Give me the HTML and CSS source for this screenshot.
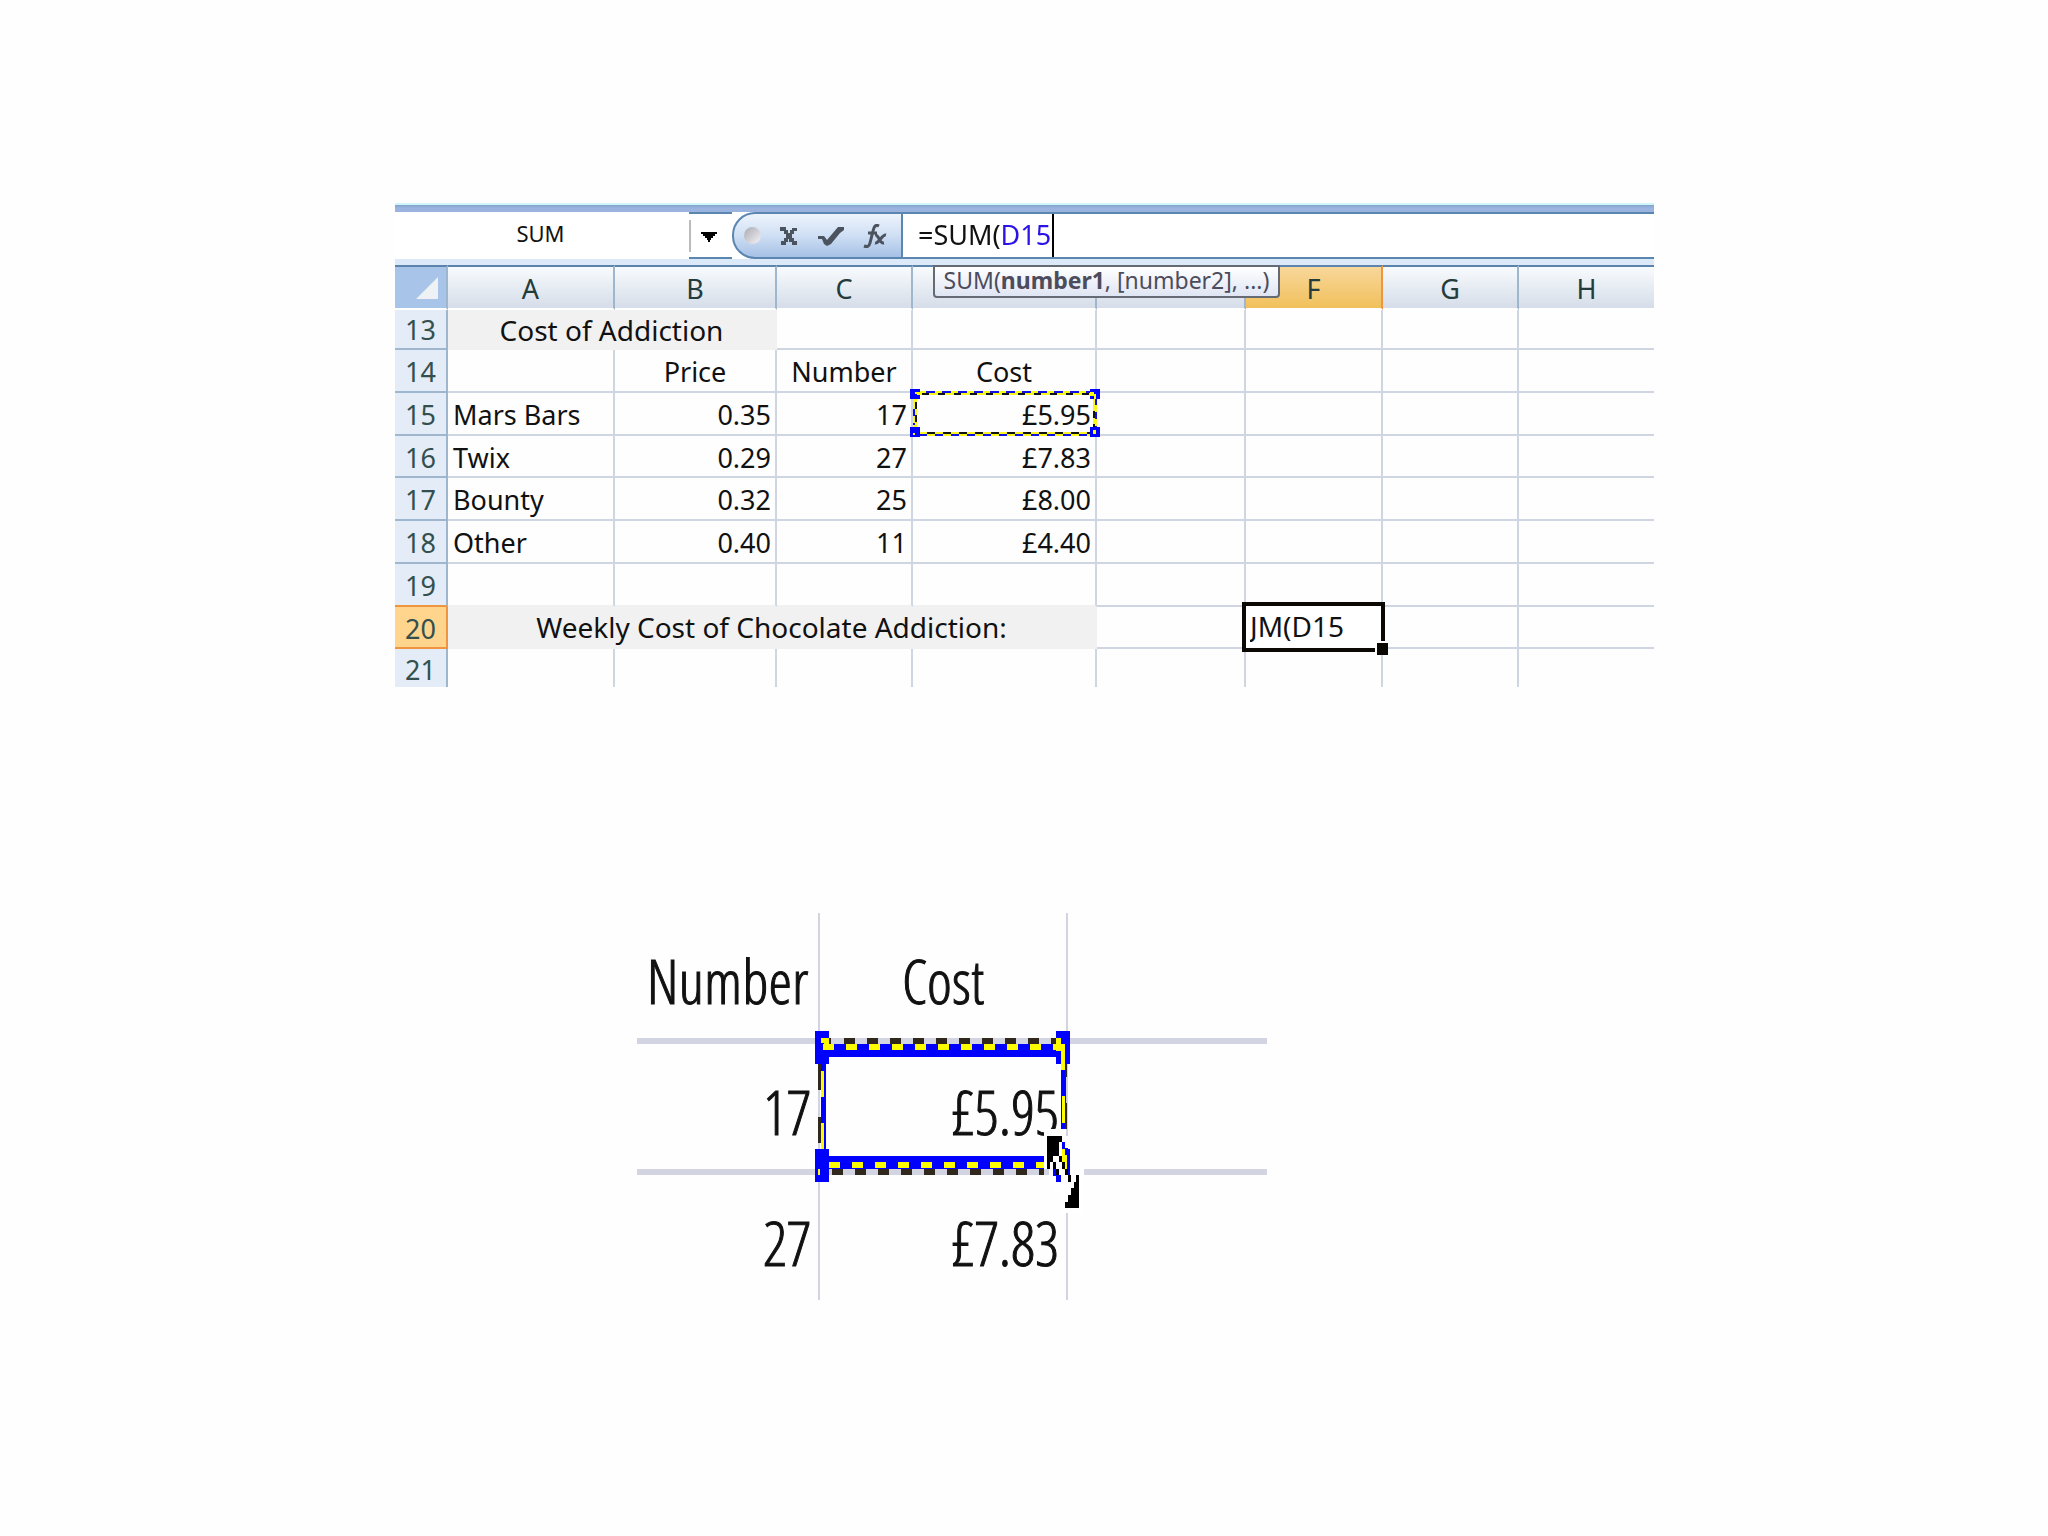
FILE: index.html
```
<!DOCTYPE html>
<html lang="en">
<head>
    <meta charset="UTF-8" />
    <title>Cost of Addiction</title>
    <meta name="viewport" content="width=device-width, initial-scale=1.0" />
    <link rel="stylesheet" href="styles.css">
</head>
<body>

<main>
    <section class="sheet">
        <div class="ribbon-edge"></div>
        <div class="formula-bar">
            <div class="name-box">
                <input type="text" aria-label="Name box" value="SUM" />
            </div>
            <button type="button" class="drop" aria-label="Show names">
                <svg width="16" height="10" viewBox="0 0 16 10"><path d="M0 0h16v2h-2v2h-2v2h-2v2H9v2H7V8H6V6H4V4H2V2H0z" /></svg>
            </button>
            <div class="tools">
                <span class="ball"></span>
                <button type="button" aria-label="Cancel">
                    <svg width="18" height="20" viewBox="0 0 18 20"><path d="M0 1h6v3h2v3h2V4h2V2h5v3h-3v3h-2v4h2v3h3v4h-5v-3h-3v-3H8v3H6v3H1v-4h3v-3h2V8H4V5H0z" /></svg>
                </button>
                <button type="button" aria-label="Enter">
                    <svg width="26" height="20" viewBox="0 0 26 20"><path d="M0 10h6l3 4L20 1h6v3l-4 3-9 11-4 2-3-2-2-5H0z" /></svg>
                </button>
                <button type="button" aria-label="Insert function">
                    <svg width="24" height="24" viewBox="0 0 24 24" class="fx"><path d="M16 2c-4-2-5 1-6 5L7 19c-1 4-3 4-6 3M5 9h9" /><path d="M12 11c4-1 4 9 9 8M23 11c-4-1-7 9-11 8" /></svg>
                </button>
            </div>
            <div class="formula">
                <input type="text" aria-label="Formula" value="=SUM(D15" />
                <span class="caret"></span>
            </div>
        </div>
        <div class="grid-wrap">
            <div class="hint">SUM(<b>number1</b>, [number2], ...)</div>
            <table class="grid">
                <colgroup>
                    <col class="c-head"><col class="c-a"><col class="c-b"><col class="c-c"><col class="c-d"><col class="c-e"><col class="c-f"><col class="c-g"><col>
                </colgroup>
                <thead>
                    <tr>
                        <th class="corner"><svg width="22" height="22" viewBox="0 0 22 22"><path d="M22 0v22H0z" /></svg></th>
                        <th>A</th><th>B</th><th>C</th><th></th><th></th><th class="on">F</th><th>G</th><th>H</th>
                    </tr>
                </thead>
                <tbody>
                    <tr class="first"><th>13</th><td colspan="2" class="merged">Cost of Addiction</td><td></td><td></td><td></td><td></td><td></td><td></td></tr>
                    <tr><th>14</th><td></td><td class="mid">Price</td><td class="mid">Number</td><td class="mid">Cost</td><td></td><td></td><td></td><td></td></tr>
                    <tr>
                        <th>15</th><td>Mars Bars</td><td class="num">0.35</td><td class="num">17</td>
                        <td class="num picked">£5.95
                            <svg class="ants" width="190" height="49" viewBox="0 0 190 49">
                                <g class="yellow"><path d="M5 4H186M5 45H186" /><path d="M5 4V45M185 4V45" /></g>
                                <g class="blue"><path d="M16 3H180" stroke-dasharray="9 7" /><path d="M9 46H180" stroke-dasharray="8 8" /><path d="M4 20V36M186 9V40" stroke-dasharray="7 7" /></g>
                                <g class="black"><path d="M12 5H180" stroke-dasharray="7 9" /><path d="M17 44H180" stroke-dasharray="8 8" /><path d="M6 13V40M184 22V40" stroke-dasharray="7 6" /></g>
                                <path class="corners" d="M0 0h10v10H0zM180 0h10v10h-10zM0 38h10v10H0zM180 38h10v10h-10z" />
                                <path class="lit" d="M5 3h5v3H7V5H5zM180 3h4v2h2v5h-2V7h-4zM183 41h3v4h-3zM3 44h2v2H3z" />
                            </svg>
                        </td>
                        <td></td><td></td><td></td><td></td>
                    </tr>
                    <tr class="short"><th>16</th><td>Twix</td><td class="num">0.29</td><td class="num">27</td><td class="num">£7.83</td><td></td><td></td><td></td><td></td></tr>
                    <tr><th>17</th><td>Bounty</td><td class="num">0.32</td><td class="num">25</td><td class="num">£8.00</td><td></td><td></td><td></td><td></td></tr>
                    <tr><th>18</th><td>Other</td><td class="num">0.40</td><td class="num">11</td><td class="num">£4.40</td><td></td><td></td><td></td><td></td></tr>
                    <tr class="above"><th>19</th><td></td><td></td><td></td><td></td><td></td><td></td><td></td><td></td></tr>
                    <tr class="short"><th class="on">20</th><td colspan="4" class="merged">Weekly Cost of Chocolate Addiction:</td><td></td>
                        <td class="active"><div class="editor"><input type="text" aria-label="Cell F20" value="JM(D15" /><span class="handle"></span></div></td>
                        <td></td><td></td></tr>
                    <tr class="last"><th>21</th><td></td><td></td><td></td><td></td><td></td><td></td><td></td><td></td></tr>
                </tbody>
            </table>
        </div>
    </section>

    <section class="closeup">
        <table>
            <colgroup><col class="k-number"><col class="k-cost"><col></colgroup>
            <tr><td class="mid">Number</td><td class="mid">Cost</td><td></td></tr>
            <tr>
                <td>17</td>
                <td class="picked">£5.95
                    <svg class="drag" width="270" height="182" viewBox="0 0 270 182" shape-rendering="crispEdges">
                        <path class="corners" d="M0 0h14v33H0zM241 0h14v33h-14zM0 118h14v33H0zM241 118h14v33h-14z" />
                        <path class="corners" d="M14 13h227v13H14zM14 125h215v13H14zM6 33h5v85H6zM246 33h5v65h-5z" />
                        <path class="dash-black" d="M29 10H241" stroke-dasharray="11 12" />
                        <path class="dash-yellow" d="M8 16H241" stroke-dasharray="11 12" />
                        <path class="dash-yellow" d="M14 134H229" stroke-dasharray="11 12" />
                        <path class="dash-black" d="M17 141H229" stroke-dasharray="11 12" />
                        <path class="lit" d="M6 7h8v6H9v-1H6zM241 7h5v6h4v26h-4V20h-5zM6 40h3v26H6zM6 92h3v26H6zM247 65h3v27h-3zM3 138h2v6H3z" />
                        <path class="dark" d="M14 7h2v6h-2zM3 33h3v26H3zM3 86h3v26H3zM250 33h2v13h-2zM250 72h2v26h-2z" />
                        <!-- double-headed resize pointer -->
                        <path fill="#fff" d="M229 98h20v7h4v13h3v20h13v45h-23v-20h-7v-12h-5v-13h-5z" />
                        <path class="corners" d="M247 111h3v6h3v1h2v26h-4v-20h-4zM241 117h3v7h-3zM238 131h3v13h5v7h-5v-6h-3z" />
                        <path class="lit" d="M247 118h3v6h2v15h-3v-7h-2z" />
                        <path d="M232 105h15v6h-3v7h-3v7h-3v6h-3v7h-3zM241 118h3v7h-3zM244 125h3v6h-3zM247 131h3v7h-3zM238 131h3v7h-3zM241 138h3v6h-3zM250 138h3v6h-3zM253 144h3v7h-3zM261 144h3v33h-14v-6h3v-7h3v-7h3v-6h2z" />
                    </svg>
                </td>
                <td></td>
            </tr>
            <tr class="last"><td>27</td><td>£7.83</td><td></td></tr>
        </table>
    </section>
</main>

</body>
</html>
```
FILE: styles.css
```
* {
  box-sizing: border-box;
}
body {
  margin: 0;
  background: #fefefe;
  color: #111;
  font-family: "Noto Sans", "Open Sans", sans-serif;
  font-size: 27px;
}
main {
  padding: 203px 394px 0 395px;
}
input,
button {
  font: inherit;
  color: inherit;
  border: none;
  background: none;
  padding: 0;
  outline: none;
}
table {
  width: 100%;
  table-layout: fixed;
  border-collapse: separate;
  border-spacing: 0;
}

/* formula bar */
.ribbon-edge {
  height: 9px;
  border-top: 2px solid #cff6fb;
  background: linear-gradient(#7fa3cb, #9bb3df 3px);
}
.formula-bar {
  display: flex;
  height: 47px;
  background: #fff;
}
.name-box {
  width: 294px;
}
.name-box input {
  width: 100%;
  height: 42px;
  padding-right: 3px;
  font-size: 22px;
  text-align: center;
}
.drop {
  width: 43px;
  border-top: 2px solid #5b86b0;
  border-bottom: 2px solid #5b86b0;
  background: linear-gradient(#bbb, #bbb) 0 6px / 2px 32px no-repeat;
}
.drop svg {
  display: block;
  margin: 2px auto 0 12px;
}
.tools {
  display: flex;
  align-items: center;
  width: 171px;
  padding: 0 14px 0 10px;
  justify-content: space-between;
  border: 2px solid #5b86b0;
  border-radius: 23px 0 0 23px;
  background: linear-gradient(#eef4fc, #cfdff4 50%, #a5c1e6);
}
.tools svg {
  display: block;
  fill: #4b535e;
}
.tools .fx {
  fill: none;
  stroke: #4b535e;
  stroke-width: 3;
}
.ball {
  width: 17px;
  height: 17px;
  border-radius: 50%;
  background: linear-gradient(135deg, #a9a9b1, #f4f4f8);
}
.formula {
  display: flex;
  flex: 1;
  padding-left: 15px;
  border-top: 2px solid #5b86b0;
  border-bottom: 2px solid #5b86b0;
}
.formula input {
  width: 134px;
  height: 41px;
  color: transparent;
  background: linear-gradient(90deg, #111 85px, #2a12e8 85px);
  -webkit-background-clip: text;
  background-clip: text;
}
.caret {
  width: 2px;
  background: #000;
}

/* worksheet */
.grid-wrap {
  position: relative;
  padding-top: 6px;
  background: #dce9f8;
}
.hint {
  position: absolute;
  z-index: 1;
  top: 6px;
  left: 538px;
  width: 347px;
  height: 33px;
  line-height: 27px;
  text-align: center;
  font-size: 23px;
  color: #4c4c5c;
  border: 2px solid #666a75;
  border-radius: 0 0 4px 4px;
  background: linear-gradient(#fff, #dfe5f3);
}
.grid {
  background: #fefefe;
}
.c-head { width: 53px; }
.c-a { width: 167px; }
.c-b { width: 162px; }
.c-c { width: 136px; }
.c-d { width: 184px; }
.c-e { width: 149px; }
.c-f { width: 137px; }
.c-g { width: 136px; }
.grid th,
.grid td {
  padding: 3px 5px 0;
  height: 43px;
  line-height: 34px;
  font-weight: normal;
  white-space: nowrap;
}
.grid td {
  text-align: left;
  border-right: 2px solid #d0d5e2;
  border-bottom: 2px solid #d0d5e2;
}
.grid td:last-child {
  border-right: none;
}
.grid thead th {
  height: 45px;
  color: #243b3b;
  border-top: 2px solid #5b83ab;
  border-right: 2px solid #9eb6ce;
  border-bottom: 2px solid #fff;
  background: linear-gradient(#f8fbfd, #d5dde9);
}
.grid thead th:last-child {
  border-right: none;
}
.grid thead .corner {
  padding: 0 8px 0 0;
  background: #a9c4e9;
}
.corner svg {
  display: block;
  margin-left: auto;
  fill: #eef2f4;
}
.grid thead .on {
  border-right-color: #f0953f;
  background: linear-gradient(#f8d79b, #f1c05b);
}
.grid tbody th {
  padding: 3px 0 0;
  color: #33504f;
  border-right: 2px solid #9eb6ce;
  border-bottom: 2px solid #9eb6ce;
  background: #e4ecf7;
}
.grid tbody .on {
  border-color: #f0953f;
  background: #ffd58d;
}
.grid .first th,
.grid .first td {
  height: 40px;
  padding-top: 2px;
}
.grid .short th,
.grid .short td { height: 42px; }
.grid .last th,
.grid .last td {
  height: 38px;
  padding-top: 4px;
  border-bottom: none;
}
.grid .mid,
.grid .merged {
  text-align: center;
}
.grid .num {
  text-align: right;
  padding-right: 4px;
}
.grid .merged {
  padding-top: 0;
  font-size: 28px;
  background: #f1f1f1;
  border-color: #f1f1f1;
}
.grid .above td:nth-child(-n+5) {
  border-bottom-color: #f1f1f1;
}
.grid .above th {
  border-bottom-color: #f0953f;
}
.picked {
  position: relative;
}
.ants {
  position: absolute;
  top: -4px;
  left: -3px;
  fill: none;
  stroke-width: 2;
}
.ants .yellow { stroke: #f8f820; stroke-width: 4; }
.ants .blue { stroke: #1010e0; }
.ants .black { stroke: #111; }
.corners { fill: #0000fe; stroke: none; }
.lit { fill: #fdfd00; stroke: none; }
.dark { fill: #30281c; }
.grid .active {
  position: relative;
  padding: 0;
}
.editor {
  position: absolute;
  top: -5px;
  left: -4px;
  width: 143px;
  height: 50px;
  border: 4px solid #0c0804;
  background: #fff;
}
.editor input {
  width: 100%;
  height: 40px;
  padding-left: 4px;
  font-size: 28px;
}
.handle {
  position: absolute;
  right: -7px;
  bottom: -7px;
  width: 13px;
  height: 14px;
  border: 2px solid #fff;
  border-width: 2px 0 0 2px;
  background: #0c0804;
}

/* enlarged view of the picked cell */
.closeup {
  width: 50%;
  margin: 226px 0 0 242px;
  font-family: "Open Sans Condensed Light", "Open Sans Condensed", "DejaVu Sans Condensed", sans-serif;
  font-size: 60px;
  font-weight: 300;
  -webkit-text-stroke: 1px #111;
}
.k-number { width: 183px; }
.k-cost { width: 248px; }
.closeup td {
  height: 131px;
  line-height: 76px;
  padding: 10px 7px 0 0;
  text-align: right;
  border-right: 2px solid #d2d4e2;
  border-bottom: 6px solid #d2d4e2;
}
.closeup td:last-child {
  border-right: none;
}
.closeup .mid {
  text-align: center;
  padding-right: 0;
}
.closeup .last td {
  height: 125px;
  border-bottom: none;
}
.drag {
  position: absolute;
  top: -13px;
  left: -5px;
}
.dash-black,
.dash-yellow {
  fill: none;
  stroke: #30281c;
  stroke-width: 6;
}
.dash-yellow {
  stroke: #fdfd00;
}
```
